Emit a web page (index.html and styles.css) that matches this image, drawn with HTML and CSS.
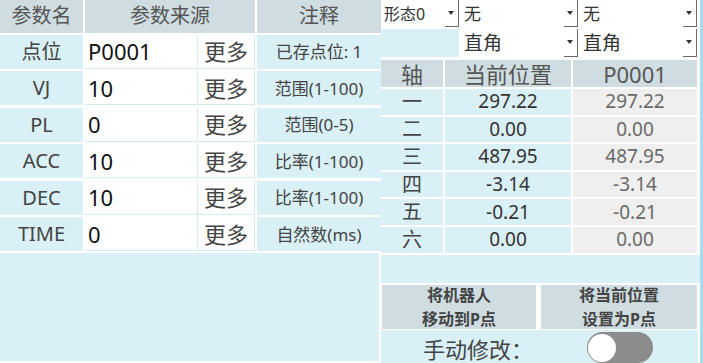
FILE: index.html
```html
<!DOCTYPE html>
<html lang="zh">
<head>
<meta charset="utf-8">
<link rel="stylesheet" href="styles.css">
</head>
<body>
<div class="app">
  <div class="left">
    <div class="params">
      <div class="h">参数名</div>
      <div class="h span2">参数来源</div>
      <div class="h">注释</div>

      <div class="lbl">点位</div><div class="inp">P0001</div><div class="more">更多</div><div class="note">已存点位: 1</div>
      <div class="lbl">VJ</div><div class="inp">10</div><div class="more">更多</div><div class="note">范围(1-100)</div>
      <div class="lbl">PL</div><div class="inp">0</div><div class="more">更多</div><div class="note">范围(0-5)</div>
      <div class="lbl">ACC</div><div class="inp">10</div><div class="more">更多</div><div class="note">比率(1-100)</div>
      <div class="lbl">DEC</div><div class="inp">10</div><div class="more">更多</div><div class="note">比率(1-100)</div>
      <div class="lbl">TIME</div><div class="inp">0</div><div class="more">更多</div><div class="note">自然数(ms)</div>
    </div>
    <div class="fill"></div>
  </div>

  <div class="right">
    <div class="selects">
      <div class="sel small"><span>形态0</span><i class="btn"></i></div>
      <div class="sel"><span>无</span><i class="btn"></i></div>
      <div class="sel"><span>无</span><i class="btn"></i></div>
      <div class="empty"></div>
      <div class="sel big"><span>直角</span><i class="btn"></i></div>
      <div class="sel big"><span>直角</span><i class="btn"></i></div>
    </div>

    <div class="axes">
      <div class="ah">轴</div><div class="ah">当前位置</div><div class="ah">P0001</div>
      <div class="ax">一</div><div class="cur">297.22</div><div class="pv">297.22</div>
      <div class="ax">二</div><div class="cur">0.00</div><div class="pv">0.00</div>
      <div class="ax">三</div><div class="cur">487.95</div><div class="pv">487.95</div>
      <div class="ax">四</div><div class="cur">-3.14</div><div class="pv">-3.14</div>
      <div class="ax">五</div><div class="cur">-0.21</div><div class="pv">-0.21</div>
      <div class="ax">六</div><div class="cur">0.00</div><div class="pv">0.00</div>
    </div>

    <div class="blank"></div>

    <div class="btns">
      <div class="act">将机器人<br>移动到P点</div>
      <div class="act">将当前位置<br>设置为P点</div>
    </div>

    <div class="manual">
      <div class="mtext">手动修改：</div>
      <div class="mtog"><div class="toggle"><div class="knob"></div></div></div>
    </div>
  </div>

  <div class="edge"></div>
</div>
</body>
</html>
```

FILE: styles.css
```css
* { box-sizing: border-box; }
html, body { margin: 0; padding: 0; }
body {
  width: 703px;
  height: 363px;
  overflow: hidden;
  background: #ffffff;
  font-family: "Noto Sans", "Noto Sans CJK SC", sans-serif;
  color: #444;
}
.app {
  display: flex;
  height: 363px;
}

/* left pane */
.left {
  width: 379px;
  height: 361px;
  display: flex;
  flex-direction: column;
  gap: 2px;
}
.params {
  display: grid;
  grid-template-columns: 83px 111px 57px 124px;
  grid-template-rows: 32.5px repeat(6, 34.3px);
  column-gap: 2px;
  row-gap: 2.2px;
  background: #fff;
}
.params > div {
  display: flex;
  align-items: center;
  justify-content: center;
  line-height: 1;
}
.h {
  background: #cfdde1;
  font-size: 20px;
  color: #555;
}
.span2 { grid-column: span 2; }
.lbl {
  background: #d9f0f6;
  font-size: 20px;
  color: #444;
}
.params > .inp {
  justify-content: flex-start;
  padding-left: 3px;
  font-size: 22px;
  color: #111;
  background: #fff;
  border-right: 1px solid #d2ebf2;
  border-bottom: 1px solid #d2ebf2;
  margin-right: -2px;
  width: 113px;
}
.more {
  font-size: 22px;
  color: #444;
  background: #fff;
  border-right: 1px solid #d2ebf2;
  border-bottom: 1px solid #d2ebf2;
}
.note {
  background: #d9f0f6;
  font-size: 17px;
  color: #444;
}
.fill {
  flex: 1;
  background: #d9f0f6;
}

/* right pane */
.right {
  width: 319px;
  margin-left: 2px;
  height: 363px;
  display: flex;
  flex-direction: column;
  background: #fff;
}
.selects {
  display: grid;
  grid-template-columns: 78px 117px 117px;
  grid-template-rows: 27px 28px;
  gap: 2px;
}
.sel {
  position: relative;
  background: #fff;
  display: flex;
  align-items: center;
  padding-left: 3px;
  font-size: 17px;
  line-height: 1;
  color: #333;
}
.sel.small { font-size: 16px; }
.sel.big { font-size: 19px; }
.sel .btn {
  position: absolute;
  right: 0;
  top: 0;
  bottom: 0;
  width: 14px;
  border-right: 1.5px solid #6a6a6a;
  border-bottom: 1.5px solid #6a6a6a;
}
.sel .btn::after {
  content: "";
  position: absolute;
  left: 3px;
  top: 11px;
  border-left: 3.5px solid transparent;
  border-right: 3.5px solid transparent;
  border-top: 4px solid #333;
}
.empty { background: #d9f0f6; }

.axes {
  margin-top: 3px;
  display: grid;
  grid-template-columns: 62px 126px 124px;
  grid-template-rows: 27px repeat(6, 25.6px);
  gap: 2px;
}
.axes > div {
  display: flex;
  align-items: center;
  justify-content: center;
  line-height: 1;
}
.ah {
  background: #cfdde1;
  font-size: 22px;
  color: #555;
}
.ax {
  background: #d9f0f6;
  font-size: 20px;
  color: #444;
}
.cur {
  background: #d9f0f6;
  font-size: 19px;
  color: #333;
}
.pv {
  background: #efefef;
  font-size: 19px;
  color: #6a6a6a;
}
.blank {
  margin-top: 2px;
  height: 28.5px;
  background: #d9f0f6;
}
.btns {
  margin-top: 1px;
  display: flex;
  gap: 3px;
  width: 317px;
}
.act {
  height: 46px;
  background: #cfdde1;
  border: 1px solid #fff;
  display: flex;
  align-items: center;
  justify-content: center;
  text-align: center;
  font-size: 16px;
  font-weight: bold;
  line-height: 24px;
  color: #444;
}
.act:first-child { width: 156px; }
.act:last-child { width: 158px; }
.manual {
  flex: 1;
  background: #d9f0f6;
  display: flex;
  width: 317px;
}
.mtext {
  width: 156px;
  padding-left: 42px;
  display: flex;
  align-items: center;
  font-size: 22px;
  line-height: 1;
  color: #444;
  padding-top: 4px;
}
.mtog {
  flex: 1;
  display: flex;
  justify-content: center;
  padding-top: 2px;
  padding-left: 5px;
}
.toggle {
  position: relative;
  width: 66px;
  height: 31px;
  border-radius: 15.5px;
  background: #8c8c8c;
}
.knob {
  position: absolute;
  left: 1px;
  top: 2px;
  width: 28px;
  height: 28px;
  border-radius: 50%;
  background: #fff;
}
.edge {
  width: 3px;
  background: #a9dbee;
}
```
